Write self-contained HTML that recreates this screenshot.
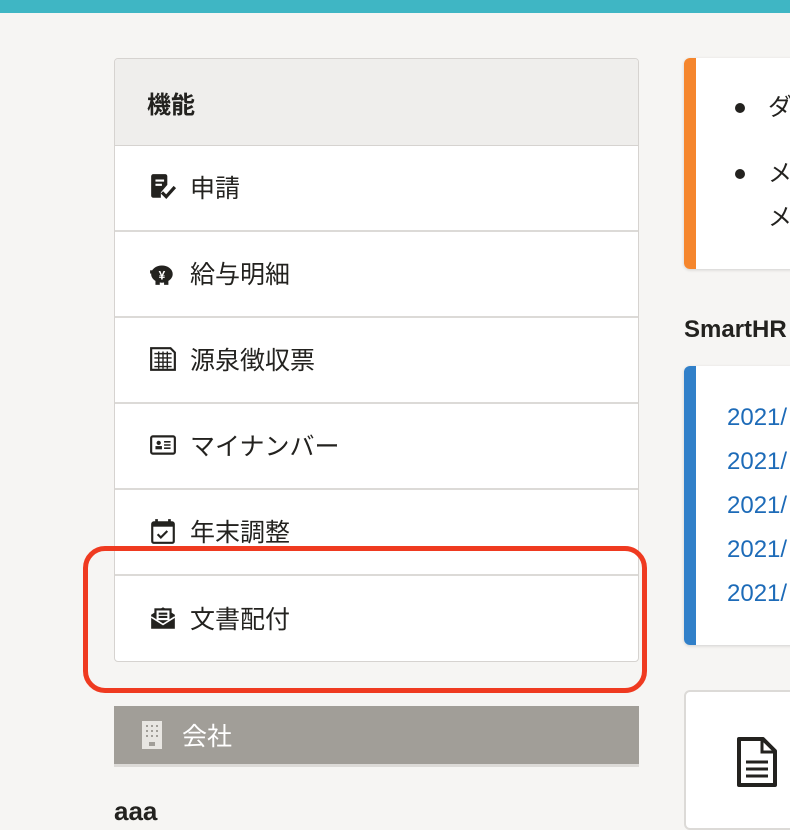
<!DOCTYPE html>
<html><head><meta charset="utf-8"><style>
*{margin:0;padding:0;box-sizing:border-box}
body{width:790px;height:818px;overflow:hidden;background:#f6f5f3;font-family:"Liberation Sans","Noto Sans CJK JP",sans-serif;color:#23221f;position:relative}
.top{position:absolute;left:0;top:0;width:790px;height:13px;background:#3fb6c4}
.panel{position:absolute;left:114px;top:58px;width:525px;height:604px;background:#fff;border:1px solid #d6d3d0;border-radius:4px;overflow:hidden}
.hd{height:87px;background:#efeeec;border-bottom:1px solid #d6d3d0;font-weight:bold;font-size:24px;padding:26px 0 0 32px}
.row{height:86px;border-bottom:2px solid #dcdad7;display:flex;align-items:center;padding-left:34px;font-size:25px;padding-bottom:2px}
.row:last-child{border-bottom:none}
.row svg{width:28px;height:28px;margin-right:13px;flex:none}
.hl{position:absolute;left:83px;top:546px;width:564px;height:147px;border:5px solid #ef3a20;border-radius:22px}
.co{position:absolute;left:114px;top:706px;width:525px;background:#a19e98;color:#fff;font-size:25px;display:flex;align-items:center;padding-left:28px;border-bottom:3px solid #dcdad7;height:61px}
.aaa{position:absolute;left:114px;top:796px;font-size:26px;font-weight:bold}
.card{position:absolute;left:684px;width:120px;background:#fff;border-radius:6px;box-shadow:0 1px 3px rgba(0,0,0,.15);overflow:hidden}
.card .bar{position:absolute;left:0;top:0;bottom:0;width:12px}
.b{position:absolute;left:51px;font-size:24px;line-height:44px}
.b i{position:absolute;left:0;top:17px;width:10px;height:10px;border-radius:50%;background:#23221f}
</style></head><body>
<div class="top"></div>
<div class="panel">
<div class="hd">機能</div>
<div class="row"><svg viewBox="0 0 26 26"><path d="M4 1h11a2 2 0 0 1 2 2v8l-6 7v5H4a2 2 0 0 1-2-2V3a2 2 0 0 1 2-2z" fill="#23221f"/><path d="M6 7h8M6 11h6" stroke="#fff" stroke-width="2"/><path d="M12 18l4 4 8-9" stroke="#23221f" stroke-width="3" fill="none"/></svg>申請</div>
<div class="row"><svg viewBox="0 0 26 26"><ellipse cx="12" cy="14" rx="10" ry="8" fill="#23221f"/><rect x="6" y="19" width="4" height="5" fill="#23221f"/><rect x="14" y="19" width="4" height="5" fill="#23221f"/><path d="M1 12l4 0" stroke="#23221f" stroke-width="3"/><text x="12" y="19" font-size="11" fill="#fff" text-anchor="middle" font-weight="bold">¥</text></svg>給与明細</div>
<div class="row"><svg viewBox="0 0 26 26"><path d="M2 3h18l4 4v16H2z" fill="none" stroke="#23221f" stroke-width="2"/><path d="M5 8h16M5 12h16M5 16h16M5 20h16M9 6v16M13 6v16M17 6v16" stroke="#23221f" stroke-width="1.3"/></svg>源泉徴収票</div>
<div class="row"><svg viewBox="0 0 26 26"><rect x="2" y="5" width="22" height="16" rx="1.5" fill="none" stroke="#23221f" stroke-width="2"/><circle cx="9" cy="11" r="2" fill="#23221f"/><rect x="6" y="14" width="6" height="3" fill="#23221f"/><path d="M14 10h6M14 13h6M14 16h6" stroke="#23221f" stroke-width="1.5"/></svg>マイナンバー</div>
<div class="row"><svg viewBox="0 0 26 26"><rect x="3" y="5" width="20" height="19" rx="1.5" fill="none" stroke="#23221f" stroke-width="2"/><rect x="3" y="5" width="20" height="4" fill="#23221f"/><path d="M7 2v5M19 2v5" stroke="#23221f" stroke-width="2.5"/><path d="M8 16l3 3 6-6" stroke="#23221f" stroke-width="2" fill="none"/></svg>年末調整</div>
<div class="row"><svg viewBox="0 0 26 26"><path d="M2 10l11-7 11 7v13H2z" fill="#23221f"/><rect x="6" y="5" width="14" height="11" fill="#fff" stroke="#23221f" stroke-width="2"/><path d="M9 9h8M9 12h8" stroke="#23221f" stroke-width="2"/><path d="M2 12l11 7 11-7" stroke="#fff" stroke-width="1.5" fill="none"/></svg>文書配付</div>
</div>
<div class="hl"></div>
<div class="co"><svg width="20" height="28" viewBox="0 0 20 28" style="margin-right:20px"><rect x="0" y="0" width="20" height="28" fill="#e8e6e2"/><g fill="#a19e98"><rect x="4" y="4" width="2" height="2"/><rect x="9" y="4" width="2" height="2"/><rect x="14" y="4" width="2" height="2"/><rect x="4" y="9" width="2" height="2"/><rect x="9" y="9" width="2" height="2"/><rect x="14" y="9" width="2" height="2"/><rect x="4" y="14" width="2" height="2"/><rect x="9" y="14" width="2" height="2"/><rect x="14" y="14" width="2" height="2"/><rect x="7" y="21" width="6" height="4"/></g></svg>会社</div>
<div class="aaa">aaa</div>
<div class="card" style="top:58px;height:211px"><div class="bar" style="background:#f5862d"></div>
<div class="b" style="top:28px"><i></i><span style="padding-left:33px">ダ</span></div>
<div class="b" style="top:94px"><i></i><span style="padding-left:33px">メ</span><br><span style="padding-left:33px">メ</span></div></div>
<div style="position:absolute;left:684px;top:316px;font-size:24px;font-weight:bold">SmartHR</div>
<div class="card" style="top:366px;height:279px"><div class="bar" style="background:#3180c9"></div>
<div style="position:absolute;left:43px;top:30px;font-size:24px;line-height:44px;color:#1d6bb8">2021/<br>2021/<br>2021/<br>2021/<br>2021/</div></div>
<div class="card" style="top:690px;height:140px;border:2px solid #dcdad7;box-shadow:none">
<svg style="position:absolute;left:50px;top:44px" width="42" height="52" viewBox="0 0 42 52"><path d="M3 3h24l12 12v34H3z" fill="none" stroke="#23221f" stroke-width="4" stroke-linejoin="round"/><path d="M26 3v13h13" fill="none" stroke="#23221f" stroke-width="3"/><path d="M10 26h22M10 33h22M10 40h22" stroke="#23221f" stroke-width="3"/></svg></div>
</body></html>
